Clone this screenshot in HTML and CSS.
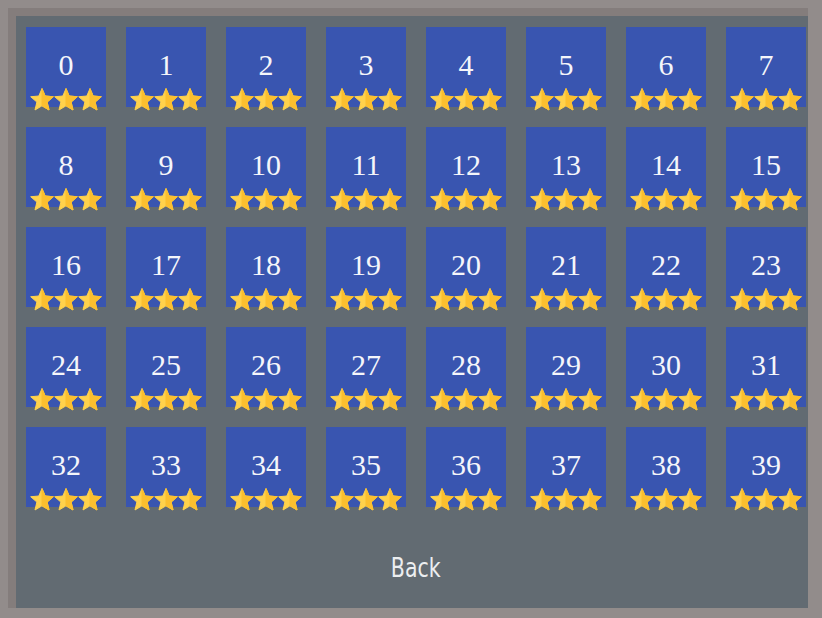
FILE: index.html
```html
<!DOCTYPE html>
<html>
<head>
<meta charset="utf-8">
<link rel="stylesheet" href="styles.css">
</head>
<body>
<svg class="defs" width="0" height="0" aria-hidden="true">
  <defs>
    <symbol id="star" viewBox="0 0 24 23">
      <polygon points="12,0.6 15.18,8.03 23.3,8.73 17.14,14.07 19.0,21.97 12,17.8 5.0,21.97 6.86,14.07 0.7,8.73 8.82,8.03" fill="#ffd24c" stroke="#ffd24c" stroke-width="1" stroke-linejoin="round"/>
      <polygon points="12,0.6 15.18,8.03 23.3,8.73 17.14,14.07 19.0,21.97 12,17.8" fill="#fbbf2f" stroke="#fbbf2f" stroke-width="1" stroke-linejoin="round"/>
    </symbol>
  </defs>
</svg>
<div class="frame">
  <main class="panel">
    <div class="grid" id="grid"></div>
    <div class="footer"><span class="back">Back</span></div>
  </main>
</div>
<script>
  var g = document.getElementById('grid');
  var html = '';
  var star = '<svg class="star" viewBox="0 0 24 23"><use href="#star"/></svg>';
  for (var i = 0; i < 40; i++) {
    html += '<div class="tile"><div class="num">' + i + '</div><div class="stars">' + star + star + star + '</div></div>';
  }
  g.innerHTML = html;
</script>
</body>
</html>
```
FILE: styles.css
```css
html, body {
  margin: 0;
  padding: 0;
}
body {
  background: #928c8b;
  width: 822px;
  height: 618px;
  overflow: hidden;
}
.defs {
  position: absolute;
}
.frame {
  margin: 8px 0 0 8px;
  width: 792px;
  height: 592px;
  padding: 8px 0 0 8px;
  background: #847d7c;
}
.panel {
  width: 792px;
  height: 592px;
  background: #626b72;
  padding: 11px 0 0 10px;
  box-sizing: border-box;
  overflow: hidden;
}
.grid {
  display: grid;
  grid-template-columns: repeat(8, 80px);
  grid-auto-rows: 80px;
  column-gap: 20px;
  row-gap: 20px;
}
.tile {
  background: #3955b0;
  display: flex;
  flex-direction: column;
  align-items: center;
  padding-top: 23px;
  box-sizing: border-box;
  height: 80px;
}
.num {
  font-family: "Liberation Serif", serif;
  font-size: 30px;
  line-height: 30px;
  color: #f5f6fa;
}
.stars {
  display: flex;
  margin-top: 8px;
}
.star {
  width: 24px;
  height: 23px;
  display: block;
}
.footer {
  margin-top: 45px;
  display: flex;
  justify-content: center;
  padding-right: 3px;
  width: 782px;
  box-sizing: border-box;
}
.back {
  font-family: "DejaVu Sans", sans-serif;
  font-size: 27px;
  line-height: 32px;
  color: #eceef0;
  display: inline-block;
  transform: scaleX(0.76);
}
```
